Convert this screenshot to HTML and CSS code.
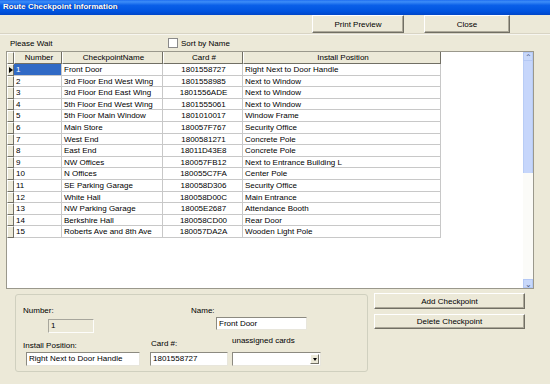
FILE: index.html
```html
<!DOCTYPE html>
<html lang="en">
<head>
    <meta charset="UTF-8">
    <title>Route Checkpoint Information</title>
    <link rel="stylesheet" href="styles.css">
</head>
<body>
    <div class="window">
        <div class="titlebar">Route Checkpoint Information</div>

        <div class="toolbar">
            <button class="btn btn-preview">Print Preview</button>
            <button class="btn btn-close">Close</button>
        </div>

        <div class="status-row">
            <span class="wait">Please Wait</span>
            <label class="sort"><span class="check"></span>Sort by Name</label>
        </div>

        <!-- таблица контрольных точек -->
        <div class="grid">
            <div class="grid-body">
                <div class="row head">
                    <div class="sel"></div>
                    <div class="c-num">Number</div>
                    <div class="c-name">CheckpointName</div>
                    <div class="c-card">Card #</div>
                    <div class="c-pos">Install Position</div>
                </div>
                <div class="row current">
                    <div class="sel"><span class="arrow"></span></div>
                    <div class="c-num"><span class="hl">1</span></div>
                    <div class="c-name">Front Door</div>
                    <div class="c-card">1801558727</div>
                    <div class="c-pos">Right Next to Door Handle</div>
                </div>
                <div class="row"><div class="sel"></div><div class="c-num">2</div><div class="c-name">3rd Floor End West Wing</div><div class="c-card">1801558985</div><div class="c-pos">Next to Window</div></div>
                <div class="row"><div class="sel"></div><div class="c-num">3</div><div class="c-name">3rd Floor End East Wing</div><div class="c-card">1801556ADE</div><div class="c-pos">Next to Window</div></div>
                <div class="row"><div class="sel"></div><div class="c-num">4</div><div class="c-name">5th Floor End West Wing</div><div class="c-card">1801555061</div><div class="c-pos">Next to Window</div></div>
                <div class="row"><div class="sel"></div><div class="c-num">5</div><div class="c-name">5th Floor Main Window</div><div class="c-card">1801010017</div><div class="c-pos">Window Frame</div></div>
                <div class="row"><div class="sel"></div><div class="c-num">6</div><div class="c-name">Main Store</div><div class="c-card">180057F767</div><div class="c-pos">Security Office</div></div>
                <div class="row"><div class="sel"></div><div class="c-num">7</div><div class="c-name">West End</div><div class="c-card">1800581271</div><div class="c-pos">Concrete Pole</div></div>
                <div class="row"><div class="sel"></div><div class="c-num">8</div><div class="c-name">East End</div><div class="c-card">18011D43E8</div><div class="c-pos">Concrete Pole</div></div>
                <div class="row"><div class="sel"></div><div class="c-num">9</div><div class="c-name">NW Offices</div><div class="c-card">180057FB12</div><div class="c-pos">Next to Entrance Building L</div></div>
                <div class="row"><div class="sel"></div><div class="c-num">10</div><div class="c-name">N Offices</div><div class="c-card">180055C7FA</div><div class="c-pos">Center Pole</div></div>
                <div class="row"><div class="sel"></div><div class="c-num">11</div><div class="c-name">SE Parking Garage</div><div class="c-card">180058D306</div><div class="c-pos">Security Office</div></div>
                <div class="row"><div class="sel"></div><div class="c-num">12</div><div class="c-name">White Hall</div><div class="c-card">180058D00C</div><div class="c-pos">Main Entrance</div></div>
                <div class="row"><div class="sel"></div><div class="c-num">13</div><div class="c-name">NW Parking Garage</div><div class="c-card">18005E2687</div><div class="c-pos">Attendance Booth</div></div>
                <div class="row"><div class="sel"></div><div class="c-num">14</div><div class="c-name">Berkshire Hall</div><div class="c-card">180058CD00</div><div class="c-pos">Rear Door</div></div>
                <div class="row"><div class="sel"></div><div class="c-num">15</div><div class="c-name">Roberts Ave and 8th Ave</div><div class="c-card">180057DA2A</div><div class="c-pos">Wooden Light Pole</div></div>
            </div>
            <div class="vscroll">
                <div class="sb-btn">&#8963;</div>
                <div class="sb-thumb"></div>
                <div class="sb-track"></div>
                <div class="sb-btn">&#8964;</div>
            </div>
        </div>

        <div class="bottom">
            <div class="group">
                <div class="frow frow-top">
                    <div class="field f-number">
                        <div class="lbl">Number:</div>
                        <div class="input disabled">1</div>
                    </div>
                    <div class="field f-name">
                        <div class="lbl">Name:</div>
                        <div class="input">Front Door</div>
                    </div>
                </div>
                <div class="frow frow-bottom">
                    <div class="field f-pos">
                        <div class="lbl">Install Position:</div>
                        <div class="input">Right Next to Door Handle</div>
                    </div>
                    <div class="field f-card">
                        <div class="lbl">Card #:</div>
                        <div class="input">1801558727</div>
                    </div>
                    <div class="field f-cards">
                        <div class="lbl">unassigned cards</div>
                        <div class="input select"><span class="drop"></span></div>
                    </div>
                </div>
            </div>
            <div class="actions">
                <button class="btn btn-add">Add Checkpoint</button>
                <button class="btn btn-del">Delete Checkpoint</button>
            </div>
        </div>
    </div>
</body>
</html>
```

FILE: styles.css
```css
body {
    margin: 0;
    padding: 0;
    background-color: #ece9d8;
    font-family: "Liberation Sans", Arial, sans-serif;
    font-size: 8px;
    color: #000;
}

.window {
    width: 550px;
    height: 384px;
    overflow: hidden;
}

.titlebar {
    height: 15px;
    line-height: 14px;
    padding-left: 3px;
    color: #fff;
    font-weight: bold;
    background: linear-gradient(to bottom, #1f6ef0 0%, #3d8df8 12%, #0a5fe8 35%, #0054e0 75%, #0046c8 100%);
    text-shadow: 1px 0 0 #0a2f8a;
}

/* Верхняя панель с кнопками */
.toolbar {
    height: 19px;
    display: flex;
    justify-content: flex-end;
    gap: 20px;
    padding-right: 40px;
    border-bottom: 1px solid #f7f6f0;
    box-shadow: 0 -1px 0 #d8d4c4 inset;
}

.btn {
    height: 18px;
    margin: 0;
    padding: 0;
    font-family: inherit;
    font-size: 8px;
    color: #000;
    background-color: #ece9d8;
    border: 1px solid;
    border-color: #fff #716f64 #716f64 #fff;
    box-shadow: -1px -1px 0 #aca899 inset;
}

.btn-preview { width: 92px; }
.btn-close { width: 86px; }

.status-row {
    height: 16px;
    display: flex;
    align-items: center;
    padding-left: 10px;
}

.wait {
    width: 158px;
}

.sort {
    display: flex;
    align-items: center;
}

.check {
    width: 8px;
    height: 8px;
    margin-right: 3px;
    background: #fff;
    border: 1px solid #8a8a8a;
}

/* Таблица */
.grid {
    margin-left: 6px;
    width: 528px;
    height: 238px;
    box-sizing: border-box;
    border: 1px solid #9a988c;
    display: flex;
    background: #fff;
}

.grid-body {
    flex: 1;
}

.row {
    display: flex;
    height: 11.6px;
    line-height: 11px;
}

.row > div {
    box-sizing: border-box;
    border-right: 1px solid #c8c8c8;
    border-bottom: 1px solid #c8c8c8;
    padding-left: 2px;
    white-space: nowrap;
    overflow: hidden;
}

.row .sel {
    width: 7px;
    padding: 0;
    background: #ece9d8;
    border-color: #716f64;
    border-left: 1px solid #fff;
    border-top: 1px solid #fff;
    position: relative;
}

.c-num { width: 48px; }
.c-name { width: 101px; }
.c-card { width: 80px; text-align: center; }
.c-pos { width: 198px; }

.row.head {
    height: 12px;
}

.row.head > div {
    background: #ece9d8;
    text-align: center;
    border-right: 1px solid #716f64;
    border-bottom: 1px solid #716f64;
    border-left: 1px solid #fff;
}

.row.current .c-num {
    padding: 0;
}

.hl {
    display: block;
    height: 100%;
    padding-left: 2px;
    color: #fff;
    background: #316ac5;
}

.arrow {
    position: absolute;
    left: 1px;
    top: 2px;
    width: 0;
    height: 0;
    border-top: 3.5px solid transparent;
    border-bottom: 3.5px solid transparent;
    border-left: 4px solid #000;
}

/* Полоса прокрутки */
.vscroll {
    width: 10px;
    display: flex;
    flex-direction: column;
    background: #fbfbf8;
}

.sb-btn {
    height: 9px;
    line-height: 9px;
    font-size: 8px;
    text-align: center;
    color: #4d6185;
    background: #c8d8fa;
    border: 1px solid #b4c8f4;
    box-sizing: border-box;
}

.sb-thumb {
    height: 112px;
    background: #c6d6fb;
    border-left: 1px solid #b8ccf5;
    border-right: 1px solid #b8ccf5;
}

.sb-track {
    flex: 1;
}

/* Нижняя часть с формой */
.bottom {
    display: flex;
    align-items: flex-start;
    padding-left: 15px;
    padding-top: 4px;
    gap: 6px;
}

.group {
    width: 353px;
    height: 78px;
    margin-top: 1px;
    box-sizing: border-box;
    border: 1px solid #d0d0bf;
    border-radius: 3px;
    padding-left: 7px;
}

.frow {
    display: flex;
    align-items: flex-start;
}

.frow-top {
    height: 38px;
}

.frow-bottom {
    height: 33px;
    align-items: flex-end;
}

.lbl {
    height: 10px;
    line-height: 10px;
    white-space: nowrap;
}

.input {
    box-sizing: border-box;
    height: 14px;
    line-height: 12px;
    padding-left: 2px;
    background: #fff;
    border: 1px solid;
    border-color: #8c8a80 #e8e6dc #e8e6dc #8c8a80;
    white-space: nowrap;
}

.input.disabled {
    background: #ece9d8;
    border-color: #a7a69c #fdfdfb #fdfdfb #a7a69c;
}

.f-number .lbl { margin-top: 11px; }
.f-number .input { margin-top: 3px; margin-left: 25px; width: 46px; }

.f-name { margin-left: 97px; }
.f-name .lbl { margin-top: 11px; }
.f-name .input { margin-top: 1px; margin-left: 25px; width: 91px; height: 13px; }

.f-pos .lbl { margin-bottom: 1px; }
.f-pos .input { margin-left: 3px; width: 114px; }

.f-card { margin-left: 10px; }
.f-card .lbl { margin-bottom: 3px; padding-left: 1px; }
.f-card .input { width: 78px; }

.f-cards { margin-left: 4px; }
.f-cards .lbl { margin-bottom: 6px; }
.f-cards .input { width: 89px; position: relative; }

.drop {
    position: absolute;
    right: 1px;
    top: 1px;
    width: 9px;
    height: 10px;
    box-sizing: border-box;
    background: #ece9d8;
    border: 1px solid;
    border-color: #fff #716f64 #716f64 #fff;
}

.drop::after {
    content: "";
    position: absolute;
    left: 1.5px;
    top: 3px;
    border-left: 2.5px solid transparent;
    border-right: 2.5px solid transparent;
    border-top: 3px solid #000;
}

.actions {
    display: flex;
    flex-direction: column;
    gap: 5px;
}

.btn-add { width: 151px; height: 16px; }
.btn-del { width: 151px; height: 15px; }
```
